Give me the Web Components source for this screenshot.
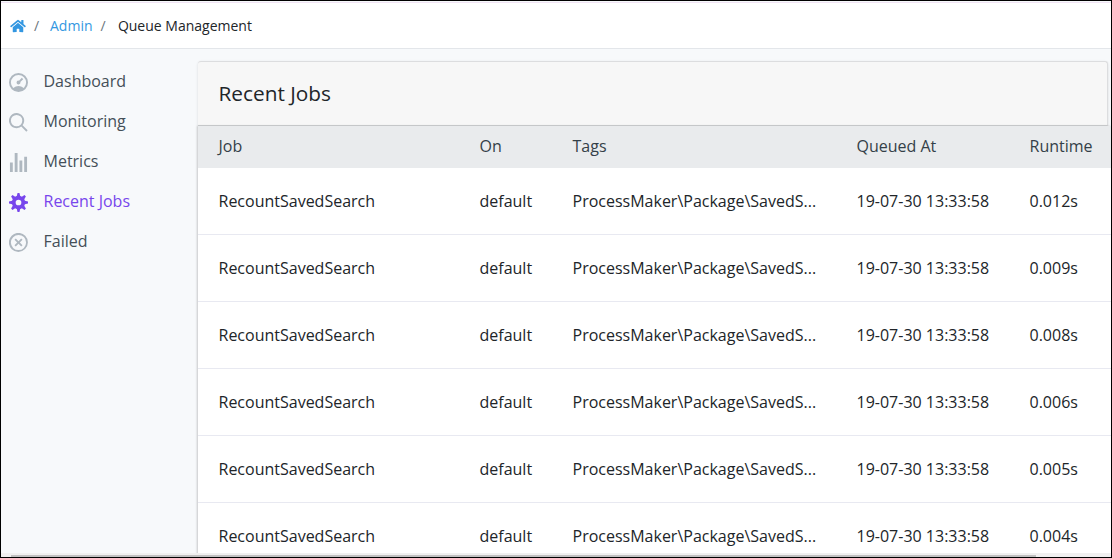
<!DOCTYPE html>
<html lang="en">
<head>
<meta charset="utf-8">
<title>Queue Management</title>
<style>
html, body { margin: 0; height: 100%; overflow: hidden; }
body { font-family: "Open Sans", sans-serif; font-size: 16px; color: #212529; }
</style>
</head>
<body>
<queue-page></queue-page>
<script>
const define = (name, html, init) => {
  const template = document.createElement('template');
  template.innerHTML = html;
  customElements.define(name, class extends HTMLElement {
    connectedCallback() {
      if (this.shadowRoot) return;
      this.attachShadow({ mode: 'open' }).append(template.content.cloneNode(true));
      if (init) init(this, this.shadowRoot);
    }
  });
};

const icons = {
  dashboard: 'M10 20a10 10 0 1 1 0-20 10 10 0 0 1 0 20zm-5.6-4.29a9.95 9.95 0 0 1 11.2 0 8 8 0 1 0-11.2 0zm6.12-7.64l3.02-3.02 1.41 1.41-3.02 3.02a2 2 0 1 1-1.41-1.41z',
  search: 'M12.9 14.32a8 8 0 1 1 1.41-1.41l5.35 5.33-1.42 1.42-5.33-5.34zM8 14A6 6 0 1 0 8 2a6 6 0 0 0 0 12z',
  bars: 'M1 10h3v10H1V10zM6 0h3v20H6V0zm5 8h3v12h-3V8zm5-4h3v16h-3V4z',
  cog: 'M3.94 6.5L2.22 3.64l1.42-1.42L6.5 3.94c.52-.3 1.1-.54 1.7-.7L9 0h2l.8 3.24c.6.16 1.18.4 1.7.7l2.86-1.72 1.42 1.42-1.72 2.86c.3.52.54 1.1.7 1.7L20 9v2l-3.24.8c-.16.6-.4 1.18-.7 1.7l1.72 2.86-1.42 1.42-2.86-1.72c-.52.3-1.1.54-1.7.7L11 20H9l-.8-3.24c-.6-.16-1.18-.4-1.7-.7l-2.86 1.72-1.42-1.42 1.72-2.86c-.3-.52-.54-1.1-.7-1.7L0 11V9l3.24-.8c.16-.6.4-1.18.7-1.7zM10 13a3 3 0 1 0 0-6 3 3 0 0 0 0 6z',
  cross: 'M2.93 17.07A10 10 0 1 1 17.07 2.93 10 10 0 0 1 2.93 17.07zm1.41-1.41A8 8 0 1 0 15.66 4.34 8 8 0 0 0 4.34 15.66zm9.9-8.49L11.41 10l2.83 2.83-1.41 1.41L10 11.41l-2.83 2.83-1.41-1.41L8.59 10 5.76 7.17l1.41-1.41L10 8.59l2.83-2.83 1.41 1.41z'
};

define('crumb-bar', `
<style>
:host { display: flex; align-items: center; height: 47px; box-sizing: border-box; padding: 0 0 0 9px; flex: none;
  background: #fff; border-top: 1px solid #f1e4f5; border-bottom: 1px solid #e3e6ea; font-size: 14px; line-height: 20px; }
svg { width: 16px; height: 14px; fill: #3397e1; margin-right: 8px; }
i { font-style: normal; color: #6c757d; width: 16px; }
a { color: #3397e1; margin-right: 8px; }
i + span { margin-left: 1.4px; }
</style>
<svg viewBox="0 0 576 512"><path d="M280.37 148.26L96 300.11V464a16 16 0 0 0 16 16l112.06-.29a16 16 0 0 0 15.92-16V368a16 16 0 0 1 16-16h64a16 16 0 0 1 16 16v95.64a16 16 0 0 0 16 16.05L464 480a16 16 0 0 0 16-16V300L295.67 148.26a12.19 12.19 0 0 0-15.3 0zM571.6 251.47L488 182.56V44.05a12 12 0 0 0-12-12h-56a12 12 0 0 0-12 12v72.61L318.47 43a48 48 0 0 0-61 0L4.34 251.47a12 12 0 0 0-1.6 16.9l25.5 31A12 12 0 0 0 45.15 301l235.22-193.74a12.19 12.19 0 0 1 15.3 0L530.9 301a12 12 0 0 0 16.9-1.6l25.5-31a12 12 0 0 0-1.7-16.93z"/></svg>
<i>/</i><a>Admin</a><i>/</i><span>Queue Management</span>`);

define('nav-item', `
<style>
:host { display: flex; align-items: center; height: 40px; color: #444f58; --icon: #afb8c0; }
:host([active]) { color: #7746ec; --icon: #7746ec; }
svg { width: 19px; height: 19px; fill: var(--icon); margin: 2px 15.5px 0 8px; flex: none; }
</style>
<svg viewBox="0 0 20 20"><path/></svg><span><slot></slot></span>`,
(el, root) => root.querySelector('path').setAttribute('d', icons[el.getAttribute('icon')]));

define('side-nav', `
<style>:host { display: block; width: 197px; flex: none; padding-top: 12px; box-sizing: border-box; }</style>
<nav-item icon="dashboard">Dashboard</nav-item>
<nav-item icon="search">Monitoring</nav-item>
<nav-item icon="bars">Metrics</nav-item>
<nav-item icon="cog" active>Recent Jobs</nav-item>
<nav-item icon="cross">Failed</nav-item>`);

define('job-row', `
<style>
:host { display: grid; grid-template-columns: 261px 93px 284px 173px 1fr; align-items: center; height: 67px;
  box-sizing: border-box; padding-left: 20.5px; border-bottom: 1px solid #e8e9f1; background: #fff; white-space: nowrap; }
:host([head]) { height: 42px; padding-bottom: 2px; background: #e9ebed; border: 0; color: #343f48; }
</style>
<slot></slot>`);

define('jobs-card', `
<style>
:host { display: block; flex: 1; min-width: 0; margin-top: 12px; }
header { height: 65px; box-sizing: border-box; width: 910px; padding: 0 0 1px 20.5px; display: flex; align-items: center;
  font-size: 20.8px; background: #f7f7f7; border: 1px solid #dcdddf; border-left: 0; border-bottom-color: #d3d5d7; border-radius: 3px 3px 0 0; box-shadow: 0 1px 3px rgba(0,0,0,.12); }
section { box-shadow: -1px 0 2px rgba(0,0,0,.2); }
</style>
<header>Recent Jobs</header>
<section>
<job-row head><span>Job</span><span>On</span><span>Tags</span><span>Queued At</span><span>Runtime</span></job-row>
</section>`,
(el, root) => {
  const section = root.querySelector('section');
  for (const runtime of ['0.012s', '0.009s', '0.008s', '0.006s', '0.005s', '0.004s']) {
    const row = document.createElement('job-row');
    for (const text of ['RecountSavedSearch', 'default', 'ProcessMaker\\Package\\SavedS...', '19-07-30 13:33:58', runtime]) {
      const cell = document.createElement('span');
      cell.textContent = text;
      row.append(cell);
    }
    section.append(row);
  }
});

define('scroll-track', `
<style>
:host { display: block; height: 4px; flex: none; background: #f0f0f0; padding: 2px 75px 0 10px; box-sizing: border-box; }
div { height: 2px; background: #c1c1c1; }
</style><div></div>`);

define('queue-page', `
<style>
:host { display: flex; flex-direction: column; width: 1112px; height: 558px; box-sizing: border-box; border: 1px solid #000; background: #f7f9fb; overflow: hidden; }
crumb-bar { margin-top: 1px; }
main { display: flex; flex: 1; min-height: 0; overflow: hidden; }
</style>
<crumb-bar></crumb-bar>
<main><side-nav></side-nav><jobs-card></jobs-card></main>
<scroll-track></scroll-track>`);
</script>
</body>
</html>
